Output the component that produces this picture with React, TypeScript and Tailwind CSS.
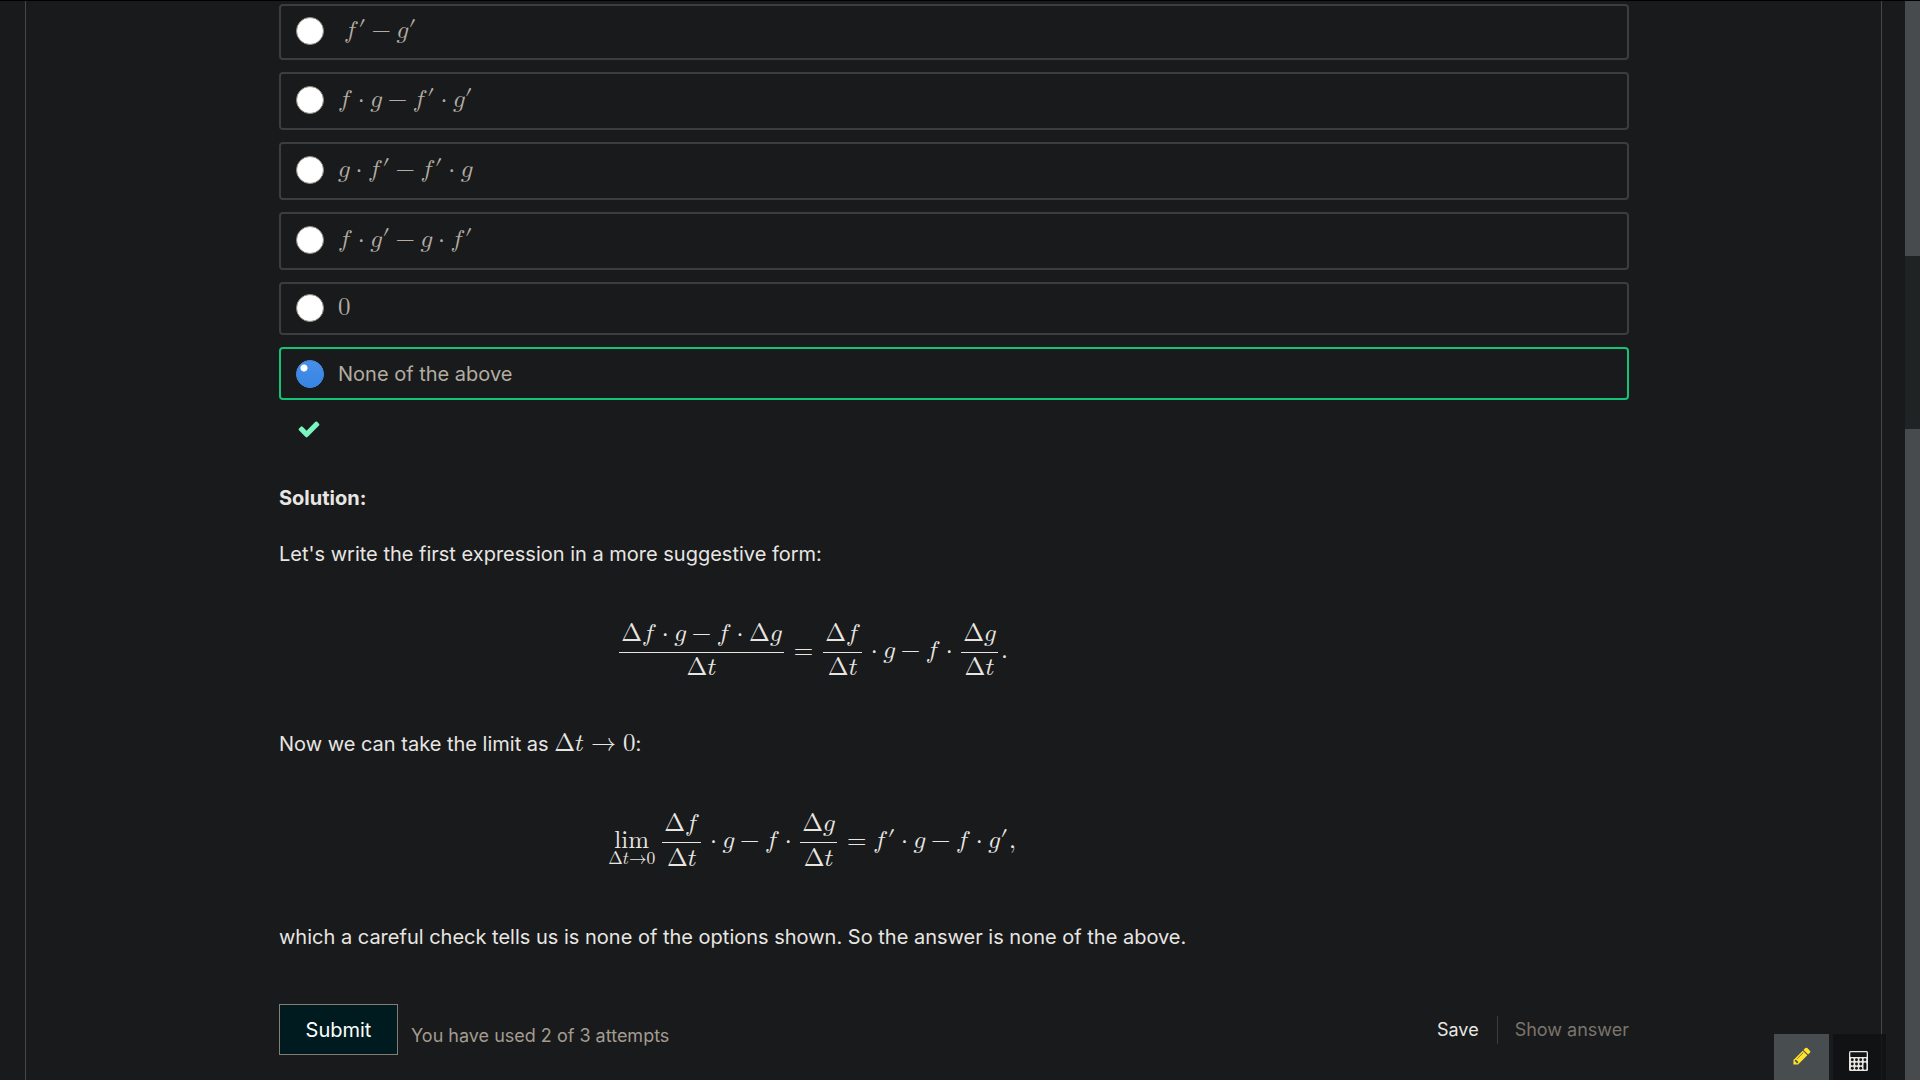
import type { ReactNode } from "react";

const F = () => (
  <mrow>
    <mi>f</mi>
    <mspace width="2px" />
  </mrow>
);
const G = () => <mi>g</mi>;
const Dot = () => <mo lspace="0.222em" rspace="0.222em">⋅</mo>;
const Minus = () => <mo lspace="0.222em" rspace="0.222em">−</mo>;
const Delta = ({ children }: { children: ReactNode }) => (
  <mrow>
    <mi mathvariant="normal">Δ</mi>
    {children}
  </mrow>
);
const Prime = ({ children }: { children: ReactNode }) => (
  <mrow>
    {children}
    <mi mathvariant="normal">′</mi>
  </mrow>
);
const Frac = ({ top, bottom }: { top: ReactNode; bottom: ReactNode }) => (
  <mrow>
    <mspace width="3px" />
    <mfrac>
      <mrow>
        <mspace width="2px" />
        {top}
        <mspace width="2px" />
      </mrow>
      <mrow>{bottom}</mrow>
    </mfrac>
    <mspace width="3px" />
  </mrow>
);

function Formula({ children, block = false }: { children: ReactNode; block?: boolean }) {
  return (
    <math
      display={block ? "block" : "inline"}
      className="text-[25px] leading-7 [font-family:'Latin_Modern_Math','Liberation_Serif',serif]"
    >
      {children}
    </math>
  );
}

const choices: { id: string; size: string; content: ReactNode }[] = [
  {
    id: "a",
    size: "h-14 pb-0.5",
    content: (
      <Formula>
        <mspace width="6px" />
        <Prime><F /></Prime><Minus /><Prime><G /></Prime>
      </Formula>
    ),
  },
  {
    id: "b",
    size: "h-[58px] pb-0.5",
    content: (
      <Formula>
        <F /><Dot /><G /><Minus /><Prime><F /></Prime><Dot /><Prime><G /></Prime>
      </Formula>
    ),
  },
  {
    id: "c",
    size: "h-[58px] pb-0.5",
    content: (
      <Formula>
        <G /><Dot /><Prime><F /></Prime><Minus /><Prime><F /></Prime><Dot /><G />
      </Formula>
    ),
  },
  {
    id: "d",
    size: "h-[58px] pb-0.5",
    content: (
      <Formula>
        <F /><Dot /><Prime><G /></Prime><Minus /><G /><Dot /><Prime><F /></Prime>
      </Formula>
    ),
  },
  { id: "e", size: "h-[53px] pb-0.5", content: <Formula><mn>0</mn></Formula> },
  { id: "f", size: "h-[53px]", content: "None of the above" },
];

function Choice({ id, size, content }: { id: string; size: string; content: ReactNode }) {
  return (
    <label
      className={`${size} flex items-center gap-3.5 rounded border-2 border-[#3b3d3f] pl-[15px] text-[#b3aca2] has-checked:border-[#15c377]`}
    >
      <input
        type="radio"
        name="answer"
        value={id}
        defaultChecked={id === "f"}
        className="size-7 shrink-0 appearance-none rounded-full border border-[#8f897f] bg-white checked:border-[#3584e4] checked:bg-[radial-gradient(circle_at_8px_8px,white_3px,transparent_4px),linear-gradient(#4a90e8,#3584e4)] checked:bg-origin-border"
      />
      <span>{content}</span>
    </label>
  );
}

function CheckIcon() {
  return (
    <svg viewBox="0 0 1792 1792" className="size-6 fill-[#7af5bf]" role="img" aria-label="Correct">
      <path d="M1671 566q0 40-28 68l-724 724-136 136q-28 28-68 28t-68-28l-136-136-362-362q-28-28-28-68t28-68l136-136q28-28 68-28t68 28l294 295 656-657q28-28 68-28t68 28l136 136q28 28 28 68z" />
    </svg>
  );
}

function PencilIcon() {
  return (
    <svg viewBox="0 0 1792 1792" className="size-5 fill-[#ffe42b]" aria-hidden="true">
      <path d="M491 1536l91-91-235-235-91 91v107h128v128h107zm523-928q0-22-22-22-10 0-17 7l-542 542q-7 7-7 17 0 22 22 22 10 0 17-7l542-542q7-7 7-17zm-54-192l416 416-832 832h-416v-416zm683 96q0 53-37 90l-166 166-416-416 166-165q36-38 90-38 53 0 91 38l235 234q37 39 37 91z" />
    </svg>
  );
}

function CalculatorIcon() {
  return (
    <svg viewBox="0 0 19 20" className="h-5 w-[19px]" aria-hidden="true">
      <rect width="19" height="20" rx="1.5" fill="#e8e6e3" />
      <g fill="#121314">
        <rect x="1.3" y="1.3" width="16.4" height="4.7" rx="0.4" />
        {[8.7, 13, 17.2].map((y) =>
          [3.3, 7.5, 11.7].map((x) => <circle key={`${x}-${y}`} cx={x} cy={y} r="1.45" />),
        )}
        <circle cx="15.9" cy="8.7" r="1.45" />
        <rect x="14.5" y="11.6" width="2.9" height="7.1" rx="1.3" />
      </g>
    </svg>
  );
}

export default function App() {
  return (
    <div className="relative flex h-screen overflow-hidden border-t border-black bg-[#191a1b] font-['Inter',sans-serif] text-xl leading-7 text-[#e8e6e3]">
      <main className="mr-[23px] ml-[25px] flex flex-1 flex-col border-x border-[#45484a] pt-[3px] pr-[252px] pl-[253px]">
        <fieldset className="flex flex-col gap-3">
          {choices.map((c) => (
            <Choice key={c.id} {...c} />
          ))}
        </fieldset>
        <div className="mt-[17px] pl-[18px]">
          <CheckIcon />
        </div>

        <section className="mt-[43px] max-w-[1066px]">
          <h2 className="font-bold">Solution:</h2>
          <p className="mt-7">Let's write the first expression in a more suggestive form:</p>
          <div className="flex h-[162px] items-center justify-center">
            <Formula block>
              <Frac
                top={<><Delta><F /></Delta><Dot /><G /><Minus /><F /><Dot /><Delta><G /></Delta></>}
                bottom={<Delta><mi>t</mi></Delta>}
              />
              <mo>=</mo>
              <Frac top={<Delta><F /></Delta>} bottom={<Delta><mi>t</mi></Delta>} />
              <Dot /><G /><Minus /><F /><Dot />
              <Frac top={<Delta><G /></Delta>} bottom={<Delta><mi>t</mi></Delta>} />
              <mtext>.</mtext>
            </Formula>
          </div>
          <p>
            Now we can take the limit as{" "}
            <Formula>
              <Delta><mi>t</mi></Delta><mo>→</mo><mn>0</mn>
            </Formula>
            :
          </p>
          <div className="flex h-[165px] items-center justify-center pb-0.5">
            <Formula block>
              <munder>
                <mi>lim</mi>
                <mrow><Delta><mi>t</mi></Delta><mo lspace="0" rspace="0">→</mo><mn>0</mn></mrow>
              </munder>
              <mspace width="4px" />
              <Frac top={<Delta><F /></Delta>} bottom={<Delta><mi>t</mi></Delta>} />
              <Dot /><G /><Minus /><F /><Dot />
              <Frac top={<Delta><G /></Delta>} bottom={<Delta><mi>t</mi></Delta>} />
              <mo>=</mo>
              <Prime><F /></Prime><Dot /><G /><Minus /><F /><Dot /><Prime><G /></Prime>
              <mspace width="1px" />
              <mtext>,</mtext>
            </Formula>
          </div>
          <p>which a careful check tells us is none of the options shown. So the answer is none of the above.</p>
        </section>

        <div className="mt-[53px] flex items-center justify-between">
          <div className="flex items-center gap-[13px]">
            <button type="button" className="h-[51px] w-[119px] border border-[#857d6f] bg-[#001b1f] text-white">
              Submit
            </button>
            <span className="mt-3 text-lg text-[#a39c91]">You have used 2 of 3 attempts</span>
          </div>
          <div className="flex items-center text-lg">
            <button type="button" className="pr-[18px]">Save</button>
            <button type="button" className="border-l border-[#3b3d3f] pl-[17px] text-[#7a756d]">Show answer</button>
          </div>
        </div>
      </main>

      <div className="flex w-[15px] shrink-0 flex-col bg-[#474b4d]">
        <div className="mt-[255px] h-[173px] bg-[#1f2323]" />
      </div>

      <div className="absolute right-[34px] bottom-0 flex h-[46px] gap-1">
        <button type="button" aria-label="Notes" className="flex w-[55px] justify-center bg-[#484d50] pt-3">
          <PencilIcon />
        </button>
        <button type="button" aria-label="Calculator" className="flex w-[53px] justify-center bg-[#111213]/85 pt-[17px] pr-0.5">
          <CalculatorIcon />
        </button>
      </div>
    </div>
  );
}
